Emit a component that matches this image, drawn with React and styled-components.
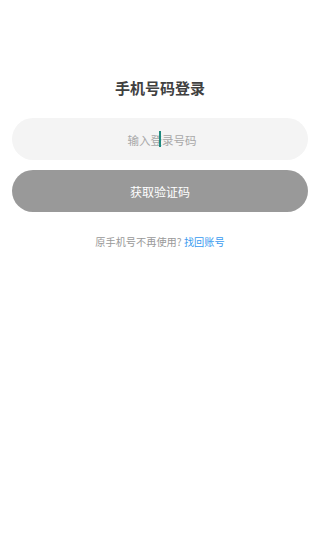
import styled, { createGlobalStyle } from 'styled-components';

const GlobalStyle = createGlobalStyle`
  html, body {
    margin: 0;
    padding: 0;
    background: #fff;
    font-family: "Noto Sans CJK SC", "Noto Sans", sans-serif;
  }
`;

export default function App() {
  return (
    <>
      <GlobalStyle />
      <Page>
        <Title>手机号码登录</Title>
        <InputBox>
          <Input placeholder="输入登录号码" />
          <Caret />
        </InputBox>
        <CodeButton>获取验证码</CodeButton>
        <Hint>
          原手机号不再使用? <HintLink href="#">找回账号</HintLink>
        </Hint>
      </Page>
    </>
  );
}

const Page = styled.div`
  display: flex;
  flex-direction: column;
  align-items: stretch;
  padding: 77px 12px 0;
  height: 559px;
  box-sizing: border-box;
`;

const Title = styled.h1`
  margin: 0 0 19px;
  font-size: 15px;
  line-height: 22px;
  font-weight: 700;
  color: #404040;
  text-align: center;
`;

const InputBox = styled.div`
  position: relative;
  height: 42px;
  border-radius: 21px;
  background: #f4f4f4;
`;

const Input = styled.input`
  width: 100%;
  height: 100%;
  border: none;
  outline: none;
  background: transparent;
  text-align: center;
  font-family: inherit;
  font-size: 11.5px;
  color: #333;
  caret-color: transparent;

  &::placeholder {
    color: #a8a8a8;
  }
`;

const Caret = styled.span`
  position: absolute;
  left: 147px;
  top: 13px;
  width: 1.5px;
  height: 16px;
  background: #1d8a7e;
`;

const CodeButton = styled.button`
  margin-top: 10px;
  height: 42px;
  border: none;
  border-radius: 21px;
  background: #999;
  color: #fff;
  font-family: inherit;
  font-size: 12px;
`;

const Hint = styled.p`
  margin: 22px 0 0;
  text-align: center;
  font-size: 10.2px;
  color: #999;
`;

const HintLink = styled.a`
  color: #3a9bf0;
  text-decoration: none;
`;
